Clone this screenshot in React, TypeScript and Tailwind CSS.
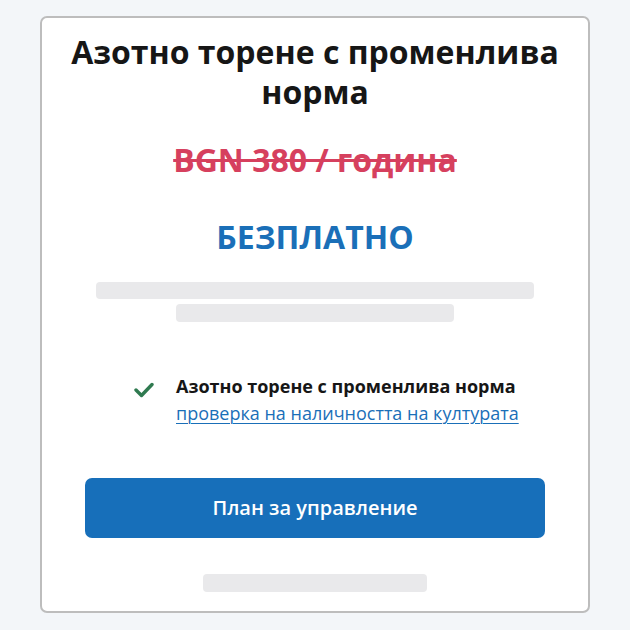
import React from "react";

export default function App() {
  return (
    <div
      className="w-[630px] h-[630px] bg-[#f3f6f9] pt-[16px] px-[40px]"
      style={{ fontFamily: '"Open Sans", "Noto Sans", sans-serif' }}
    >
      <div className="w-[550px] h-[597px] bg-white border-2 border-[#bdbdbd] rounded-[7px] flex flex-col items-center pt-[14px]">
        <h1 className="text-[32px] leading-[40px] font-bold text-[#161616] text-center px-[10px]">
          Азотно торене с променлива норма
        </h1>
        <div className="mt-[28px] text-[32px] leading-[40px] font-bold text-[#d6405e] line-through decoration-[3px]">
          BGN 380 / година
        </div>
        <div className="mt-[37px] text-[32px] leading-[40px] font-bold text-[#1a6fb8]">
          БЕЗПЛАТНО
        </div>
        <div className="mt-[25px] w-[438px] h-[17px] rounded-[4px] bg-[#e9e9eb]" />
        <div className="mt-[5px] w-[278px] h-[18px] rounded-[4px] bg-[#e9e9eb]" />
        <div className="self-start ml-[92px] mt-[51px] flex gap-[22px]">
          <svg width="20" height="18" viewBox="0 0 20 18" className="mt-[8px]" fill="none" stroke="#2f7a50" strokeWidth="3.4" strokeLinecap="round" strokeLinejoin="round">
            <path d="M2 9l5.5 5.5L18 3.5" />
          </svg>
          <div className="flex flex-col">
            <span className="text-[18px] leading-[26px] font-bold text-[#161616]">
              Азотно торене с променлива норма
            </span>
            <a className="text-[18px] leading-[28px] text-[#1a6fb8] underline underline-offset-[3px] decoration-1" href="#">
              проверка на наличността на културата
            </a>
          </div>
        </div>
        <button className="mt-[51px] w-[460px] h-[60px] rounded-[7px] bg-[#176fba] text-white text-[20px] font-semibold">
          План за управление
        </button>
        <div className="mt-[36px] w-[224px] h-[18px] rounded-[4px] bg-[#e9e9eb]" />
      </div>
    </div>
  );
}
